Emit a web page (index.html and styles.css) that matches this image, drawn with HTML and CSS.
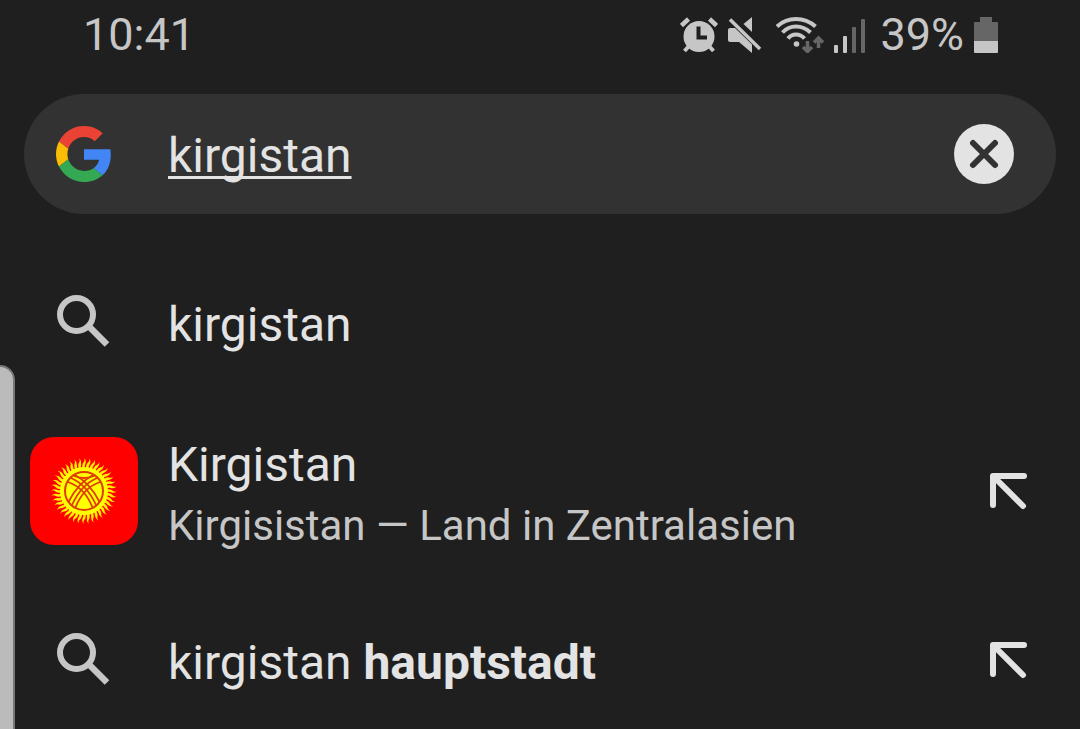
FILE: index.html
```
<!DOCTYPE html>
<html lang="de">
<head>
    <meta charset="UTF-8">
    <meta name="viewport" content="width=device-width, initial-scale=1.0">
    <title>kirgistan</title>
    <link rel="stylesheet" href="styles.css">
</head>
<body>
    <!-- Shared icons -->
    <svg class="sprite" aria-hidden="true">
        <symbol id="icon-search" viewBox="0 0 54 54">
            <circle cx="19.5" cy="19.5" r="16.5" fill="none" stroke="currentColor" stroke-width="6"/>
            <path d="M33 32.5 50 49.5" stroke="currentColor" stroke-width="6.5"/>
        </symbol>
        <symbol id="icon-insert" viewBox="0 0 38 38">
            <path d="M3 33V4H34M4 5 33 34" fill="none" stroke="currentColor" stroke-width="6" stroke-linecap="round" stroke-linejoin="round"/>
        </symbol>
    </svg>

    <header class="status-bar">
        <time class="clock">10:41</time>
        <div class="status-icons">
            <svg class="alarm" viewBox="0 0 38 36" role="img" aria-label="Wecker">
                <g stroke="currentColor" stroke-width="4.5">
                    <path d="M1.5 8.5 8.5 2M36.5 8.5 29.5 2"/>
                    <path d="M9 29 4.5 34M29 29 33.5 34" stroke-width="4"/>
                </g>
                <circle cx="19" cy="19.5" r="15.5" fill="currentColor"/>
                <path d="M18.5 9.5V20.5H27" fill="none" stroke="#1f1f1f" stroke-width="4"/>
            </svg>
            <svg class="mute" viewBox="0 0 34 36" role="img" aria-label="Stumm">
                <path d="M0 13Q0 11 2 11H7L24 27.5V36L11 25H2Q0 25 0 23ZM24 0V15L15.5 7Z" fill="currentColor"/>
                <path d="M2 2.5 32 32" stroke="currentColor" stroke-width="3.5"/>
            </svg>
            <svg class="wifi" viewBox="0 0 48 36" role="img" aria-label="WLAN">
                <g fill="none" stroke="currentColor" stroke-width="4">
                    <path d="M1 9.5Q9 2 20 2T39.5 9.5"/>
                    <path d="M6.5 15.5Q12 9.5 20 9.5T34.5 15.5"/>
                    <path d="M12 21.5Q15 17.5 20 17.5T28.5 21.5"/>
                </g>
                <circle cx="20.5" cy="27" r="2.8" fill="currentColor"/>
                <path d="M31.5 24V34M27 30 31.5 34.5 36 30M42.5 31V21M38 25.5 42.5 21 47 25.5" fill="none" stroke="#666" stroke-width="3.5"/>
            </svg>
            <svg class="signal" viewBox="0 0 32 36" role="img" aria-label="Mobilfunk">
                <g fill="currentColor">
                    <rect y="28" width="4" height="8" rx="1"/>
                    <rect x="9" y="19" width="4" height="17" rx="1"/>
                </g>
                <g fill="#666">
                    <rect x="18" y="10" width="4" height="26" rx="1"/>
                    <rect x="27" y="2" width="4" height="34" rx="1"/>
                </g>
            </svg>
            <span class="charge">39%</span>
            <svg class="battery" viewBox="0 0 24 36" role="img" aria-label="Akku">
                <path d="M6 0H18V5H23Q24 5 24 6V24H0V6Q0 5 1 5H6Z" fill="#666"/>
                <path d="M0 24H24V35Q24 36 23 36H1Q0 36 0 35Z" fill="currentColor"/>
            </svg>
        </div>
    </header>

    <form class="search-bar" role="search">
        <div class="lead">
            <svg class="google" viewBox="0 0 48 48" role="img" aria-label="Google">
                <path fill="#EA4335" d="M24 9.5c3.54 0 6.71 1.22 9.21 3.6l6.85-6.85C35.9 2.38 30.47 0 24 0 14.62 0 6.51 5.38 2.56 13.22l7.98 6.19C12.43 13.72 17.74 9.5 24 9.5z"/>
                <path fill="#4285F4" d="M46.98 24.55c0-1.57-.15-3.09-.38-4.55H24v9.02h12.94c-.58 2.96-2.26 5.48-4.78 7.18l7.73 6c4.51-4.18 7.09-10.36 7.09-17.65z"/>
                <path fill="#FBBC05" d="M10.53 28.59c-.48-1.45-.76-2.99-.76-4.59s.27-3.14.76-4.59l-7.98-6.19C.92 16.46 0 20.12 0 24c0 3.88.92 7.54 2.56 10.78l7.97-6.19z"/>
                <path fill="#34A853" d="M24 48c6.48 0 11.93-2.13 15.89-5.81l-7.73-6c-2.15 1.45-4.92 2.3-8.16 2.3-6.26 0-11.57-4.22-13.47-9.91l-7.98 6.19C6.51 42.62 14.62 48 24 48z"/>
            </svg>
        </div>
        <input class="query" type="text" value="kirgistan" aria-label="Suche" spellcheck="false">
        <button class="clear" type="reset" aria-label="Löschen">
            <svg viewBox="0 0 60 60" aria-hidden="true">
                <path d="M19 19 41 41M41 19 19 41" stroke="#323232" stroke-width="6" stroke-linecap="round"/>
            </svg>
        </button>
    </form>

    <main>
        <ul class="suggestions">
            <li class="suggestion">
                <div class="lead"><svg class="search-icon" aria-hidden="true"><use href="#icon-search"/></svg></div>
                <a class="label" href="#">kirgistan</a>
            </li>
            <li class="suggestion">
                <div class="lead">
                    <svg class="flag" viewBox="0 0 108 108" role="img" aria-label="Flagge Kirgisistans">
                        <defs>
                            <g id="rays" fill="#fe0">
                                <path id="ray" d="M-1.7-22Q-2.2-27-.6-28.5T.6-33Q2.6-29.5 1.3-27T1.7-22Z"/>
                                <use href="#ray" transform="rotate(9)"/>
                                <use href="#ray" transform="rotate(18)"/>
                                <use href="#ray" transform="rotate(27)"/>
                                <use href="#ray" transform="rotate(36)"/>
                            </g>
                        </defs>
                        <rect width="108" height="108" fill="#f00"/>
                        <g transform="translate(54 54)">
                            <use href="#rays"/>
                            <use href="#rays" transform="rotate(45)"/>
                            <use href="#rays" transform="rotate(90)"/>
                            <use href="#rays" transform="rotate(135)"/>
                            <use href="#rays" transform="rotate(180)"/>
                            <use href="#rays" transform="rotate(225)"/>
                            <use href="#rays" transform="rotate(270)"/>
                            <use href="#rays" transform="rotate(315)"/>
                            <circle r="24" fill="#ff0"/>
                            <g fill="none" stroke="#e03c00" stroke-width="1.8">
                                <circle r="19" stroke-width="2"/>
                                <path d="M-15.5 11Q-6-8 9-16M-12 14Q-3-6 13-13M-8.5 16.5Q-1-3 16-9"/>
                                <path d="M15.5 11Q6-8-9-16M12 14Q3-6-13-13M8.5 16.5Q1-3-16-9"/>
                                <path d="M-10-15Q0-11 10-15"/>
                            </g>
                        </g>
                    </svg>
                </div>
                <a class="label" href="#">
                    Kirgistan
                    <small>Kirgisistan — Land in Zentralasien</small>
                </a>
                <button class="insert" type="button" aria-label="Kirgistan übernehmen"><svg aria-hidden="true"><use href="#icon-insert"/></svg></button>
            </li>
            <li class="suggestion">
                <div class="lead"><svg class="search-icon" aria-hidden="true"><use href="#icon-search"/></svg></div>
                <a class="label" href="#">kirgistan <b>hauptstadt</b></a>
                <button class="insert" type="button" aria-label="kirgistan hauptstadt übernehmen"><svg aria-hidden="true"><use href="#icon-insert"/></svg></button>
            </li>
        </ul>
    </main>

    <div class="edge-handle"></div>
</body>
</html>
```
FILE: styles.css
```
* {
    margin: 0;
    padding: 0;
    box-sizing: border-box;
}

body {
    min-height: 100vh;
    background: #1f1f1f;
    color: #e3e3e3;
    font-family: Roboto, "Noto Sans", sans-serif;
    font-size: 48px;
    overflow: hidden;
}

svg {
    display: block;
}

button {
    border: none;
    background: none;
    color: inherit;
    cursor: pointer;
}

.sprite {
    position: absolute;
    width: 0;
    height: 0;
}

.status-bar {
    display: flex;
    align-items: center;
    justify-content: space-between;
    padding: 8px 82px 32px 83px;
    color: #c6c6c6;
    font-size: 45px;
    line-height: 54px;
}

.status-icons {
    display: flex;
    align-items: center;
    gap: 10px;
}

.status-icons svg {
    height: 36px;
}

.alarm {
    width: 38px;
}

.mute {
    width: 34px;
}

.wifi {
    width: 48px;
    margin-left: 4px;
}

.signal {
    width: 32px;
}

.charge {
    margin-left: 4px;
}

.battery {
    width: 24px;
}

.search-bar {
    display: flex;
    align-items: center;
    height: 120px;
    margin: 0 24px;
    padding: 0 42px 0 6px;
    border-radius: 60px;
    background: #323232;
}

.lead {
    display: flex;
    flex: none;
    justify-content: center;
    width: 108px;
    margin-right: 30px;
}

.google {
    width: 56px;
    height: 56px;
}

.query {
    flex: 1;
    min-width: 0;
    padding-top: 4px;
    border: none;
    outline: none;
    background: none;
    color: inherit;
    font: inherit;
    line-height: 56px;
    text-decoration: underline;
    text-decoration-thickness: 3px;
    text-decoration-skip-ink: none;
    text-underline-offset: 4px;
}

.clear {
    width: 60px;
    height: 60px;
    border-radius: 50%;
    background: #e3e3e3;
}

.suggestions {
    padding-top: 23px;
    list-style: none;
}

.suggestion {
    display: flex;
    align-items: center;
    height: 169px;
    padding: 0 52px 0 30px;
}

.search-icon {
    width: 54px;
    height: 54px;
    color: #c6c6c6;
}

.flag {
    width: 108px;
    height: 108px;
    border-radius: 24px;
}

.label {
    flex: 1;
    padding-top: 6px;
    color: inherit;
    line-height: 64px;
    text-decoration: none;
}

.label small {
    display: block;
    color: #c6c6c6;
    font-size: 42px;
    line-height: 58px;
}

.insert svg {
    width: 38px;
    height: 38px;
}

/* Edge panel handle, floats over the page */
.edge-handle {
    position: absolute;
    top: 365px;
    bottom: 0;
    left: 0;
    width: 15px;
    border: solid #777;
    border-width: 2px 2px 0 0;
    border-radius: 0 16px 0 0;
    background: #bbb;
}
```
